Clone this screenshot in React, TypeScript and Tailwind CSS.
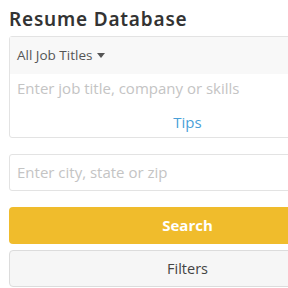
export default function App() {
  return (
    <div className="w-[288px] h-[288px] overflow-hidden bg-white" style={{ fontFamily: '"Open Sans", sans-serif' }}>
      <div className="w-[366px] pl-[9px] pt-[6px]">
        <h1 className="text-[19px] font-semibold text-[#333] leading-[26px] tracking-[0.8px]" style={{ fontFamily: '"Noto Sans", sans-serif' }}>
          Resume Database
        </h1>

        {/* Keyword search */}
        <div className="mt-[4px] h-[102px] border border-[#e3e3e3] rounded-[3px] flex flex-col">
          <div className="bg-[#f8f8f8] h-[37px] flex items-center pl-[7px] text-[13.5px] text-[#555]">
            All Job Titles
            <svg className="ml-[5px]" width="8" height="5" viewBox="0 0 8 5">
              <path d="M0 0h8L4 5z" fill="#555" />
            </svg>
          </div>
          <div className="pl-[7px] pt-[3px] text-[15px] text-[#c4c4c4]">
            Enter job title, company or skills
          </div>
          <div className="mt-auto mb-[4px] text-center text-[15px] text-[#4a9fd8]">Tips</div>
        </div>

        {/* Location */}
        <div className="mt-[16px] h-[37px] border border-[#e3e3e3] rounded-[3px] flex items-center pl-[7px] text-[15px] text-[#c4c4c4]">
          Enter city, state or zip
        </div>

        <button className="mt-[16px] w-full h-[37px] rounded-[4px] bg-[#f0bc2c] text-white font-bold text-[15px] flex items-center justify-center">
          Search
        </button>
        <button className="mt-[6px] w-full h-[37px] rounded-[4px] bg-[#f6f6f6] border border-[#dcdcdc] text-[#444] text-[14.5px] flex items-center justify-center">
          Filters
        </button>
      </div>
    </div>
  );
}
